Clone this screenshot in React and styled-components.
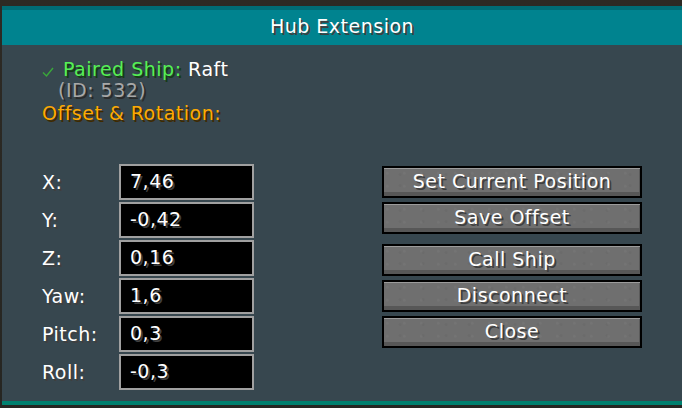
import React from "react";
import styled, { createGlobalStyle } from "styled-components";

const GlobalStyle = createGlobalStyle`
  html, body {
    margin: 0;
    padding: 0;
    width: 682px;
    height: 408px;
    overflow: hidden;
    background: #2a2925;
  }
  * {
    box-sizing: border-box;
  }
`;

const shadowOf = (color) => {
  const map = {
    "#ffffff": "#3f3f3f",
    "#55f055": "#153c15",
    "#ffaa00": "#3f2a00",
    "#a8a8a8": "#2a2a2a",
  };
  return map[color] || "#3f3f3f";
};

const Screen = styled.div`
  width: 682px;
  height: 408px;
  padding: 6px 0 3px 2px;
  background: linear-gradient(#2d2a24, #262622);
  font-family: "DejaVu Sans", "Liberation Sans", sans-serif;
  font-size: 19px;
  letter-spacing: 0.5px;
`;

const Panel = styled.div`
  height: 399px;
  display: flex;
  flex-direction: column;
  background: #37474f;
  border-bottom: 4px solid #00806f;
`;

const Header = styled.div`
  height: 39px;
  flex-shrink: 0;
  display: flex;
  align-items: center;
  justify-content: center;
  padding-bottom: 2px;
  background: #00838f;
  border-top: 4px solid #006c75;
`;

const Label = styled.span`
  color: ${(p) => p.$color || "#ffffff"};
  text-shadow: 2px 2px 0 ${(p) => shadowOf(p.$color || "#ffffff")};
  white-space: pre;
  line-height: 19px;
`;

const Body = styled.div`
  padding: 15px 0 0 40px;
  display: flex;
  flex-direction: column;
`;

const InfoLine = styled.div`
  display: flex;
  align-items: center;
  height: 19px;
  margin-bottom: ${(p) => p.$gap || 2}px;
  padding-left: ${(p) => p.$indent || 0}px;
`;

const Check = styled.svg`
  width: 12px;
  height: 12px;
  margin: 4px 9px 0 0;
`;

const Form = styled.div`
  display: flex;
  align-items: flex-start;
  gap: 128px;
  margin-top: 39px;
`;

const Fields = styled.div`
  display: flex;
  flex-direction: column;
  gap: 2px;
`;

const FieldRow = styled.div`
  display: flex;
  align-items: center;
  height: 36px;
`;

const FieldLabel = styled(Label)`
  width: 77px;
`;

const Input = styled.div`
  width: 135px;
  height: 36px;
  display: flex;
  align-items: center;
  padding: 0 0 1px 9px;
  background: #000000;
  border: 2px solid #a0a0a0;
`;

const Buttons = styled.div`
  display: flex;
  flex-direction: column;
  padding-top: 2px;
`;

const Button = styled.div`
  width: 260px;
  height: 32px;
  margin-top: ${(p) => (p.$spaced ? 10 : 4)}px;
  display: flex;
  align-items: center;
  justify-content: center;
  padding-bottom: 2px;
  border: 2px solid #000000;
  background-color: #6f6f6f;
  background-image: radial-gradient(circle at 20% 40%, rgba(255,255,255,0.03) 0 1px, transparent 2px),
    radial-gradient(circle at 70% 60%, rgba(0,0,0,0.035) 0 1px, transparent 2px);
  background-size: 17px 13px, 23px 11px;
  box-shadow: inset 0 1px 0 #9c9c9c, inset 0 -4px 0 #575757, inset -1px 0 0 #5a5a5a;

  &:first-child {
    margin-top: 0;
  }
`;

const fields = [
  { name: "X:", value: "7,46" },
  { name: "Y:", value: "-0,42" },
  { name: "Z:", value: "0,16" },
  { name: "Yaw:", value: "1,6" },
  { name: "Pitch:", value: "0,3" },
  { name: "Roll:", value: "-0,3" },
];

const actions = [
  { label: "Set Current Position" },
  { label: "Save Offset" },
  { label: "Call Ship", spaced: true },
  { label: "Disconnect" },
  { label: "Close" },
];

export default function App() {
  return (
    <>
      <GlobalStyle />
      <Screen>
        <Panel>
          <Header>
            <Label>Hub Extension</Label>
          </Header>
          <Body>
            <InfoLine $gap={2}>
              <Check viewBox="0 0 12 12">
                <path d="M1 6.5 L4.5 10 L11 2" fill="none" stroke="#3aa83a" strokeWidth="1.4" />
              </Check>
              <Label $color="#55f055">Paired Ship: </Label>
              <Label>Raft</Label>
            </InfoLine>
            <InfoLine $indent={16} $gap={4}>
              <Label $color="#a8a8a8">(ID: 532)</Label>
            </InfoLine>
            <InfoLine>
              <Label $color="#ffaa00">Offset &amp; Rotation:</Label>
            </InfoLine>
            <Form>
              <Fields>
                {fields.map((f) => (
                  <FieldRow key={f.name}>
                    <FieldLabel>{f.name}</FieldLabel>
                    <Input>
                      <Label>{f.value}</Label>
                    </Input>
                  </FieldRow>
                ))}
              </Fields>
              <Buttons>
                {actions.map((a) => (
                  <Button key={a.label} $spaced={a.spaced}>
                    <Label>{a.label}</Label>
                  </Button>
                ))}
              </Buttons>
            </Form>
          </Body>
        </Panel>
      </Screen>
    </>
  );
}
